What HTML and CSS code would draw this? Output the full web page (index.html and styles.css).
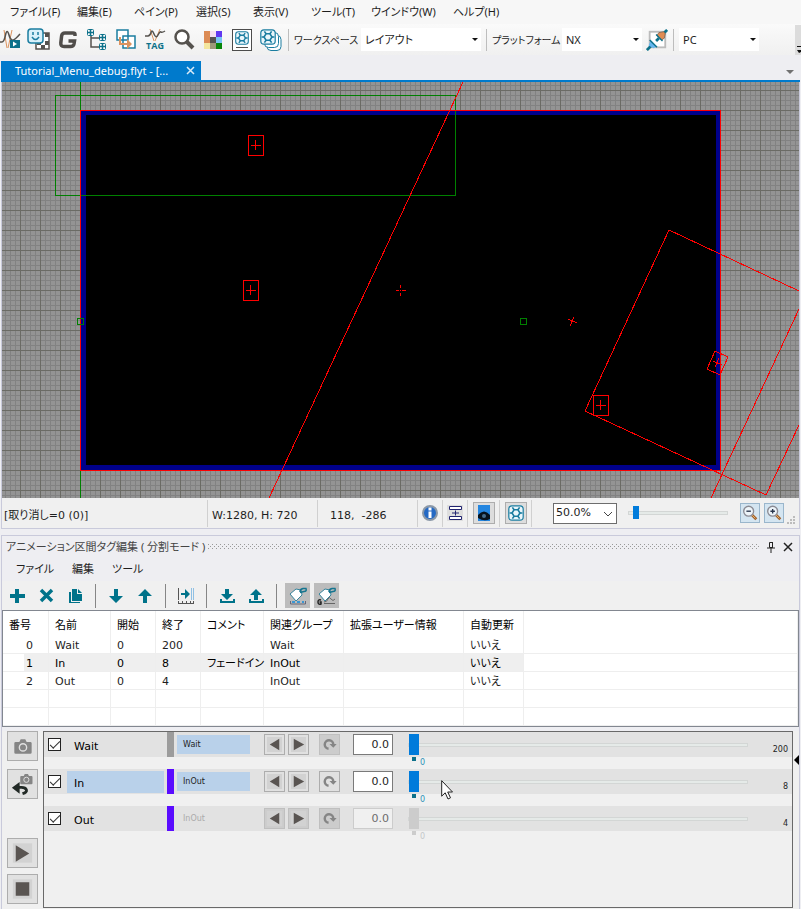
FILE: index.html
```html
<!DOCTYPE html>
<html lang="ja">
<head>
<meta charset="utf-8">
<title>Tutorial_Menu_debug.flyt</title>
<link rel="stylesheet" href="styles.css">
</head>
<body>
<svg class="defs" aria-hidden="true">
  <defs>
    <symbol id="hex" viewBox="0 0 20 20">
      <rect x="1" y="1" width="18" height="18" rx="4" fill="#eaf6fb" stroke="#1b7da0" stroke-width="1.500"/>
      <path d="M7.600 6h4.800L15 10l-2.600 4H7.600L5 10z" fill="none" stroke="#1b7da0" stroke-width="2"/>
      <path d="M7.600 6L5.500 3M12.400 6l2.100-3M15 10h3M12.400 14l2.100 3M7.600 14l-2.100 3M5 10H2" stroke="#1b7da0" stroke-width="2"/>
    </symbol>
    <symbol id="prev" viewBox="0 0 20 20"><rect x="2" y="2" width="16" height="16" fill="#d2d2d2"/><path d="M15 4v12L5 10z" fill="#5a5552"/></symbol>
    <symbol id="next" viewBox="0 0 20 20"><rect x="2" y="2" width="16" height="16" fill="#d2d2d2"/><path d="M5 4v12l11-6z" fill="#5a5552"/></symbol>
    <symbol id="loop" viewBox="0 0 20 20"><path d="M9 14.500A4.500 4.500 0 1 1 14 10" fill="none" stroke="#858585" stroke-width="2.600"/><path d="M10 9.500h7.500L14 13.500z" fill="#858585"/></symbol>
    <symbol id="camera" viewBox="0 0 20 18"><path d="M2 4h4l1.500-3h5L14 4h4q1.500 0 1.500 1.500v10Q19.500 17 18 17H2Q.5 17 .5 15.500v-10Q.5 4 2 4z" fill="#858585"/><circle cx="10" cy="10" r="4" fill="none" stroke="#e0e0e0" stroke-width="1.500"/></symbol>
    <symbol id="tag" viewBox="0 0 25 25"><path d="M5 11l6-5 5 1 1 5-6 6z" fill="#fff" stroke="#36849c"/><path d="M15 9q0-3 3-3.500h3q1 3-2 3l-4 1" fill="none" stroke="#16758f" stroke-width="1.500"/></symbol>
    <symbol id="lens" viewBox="0 0 20 20"><path d="M12 12l5 5" stroke="#a0602c" stroke-width="3"/><path d="M12 12l4 4" stroke="#f1bd72"/><circle cx="8.500" cy="8" r="5.500" fill="#edf4f9" stroke="#8b8b94" stroke-width="1.500"/></symbol>
  </defs>
</svg>

<nav class="menubar" aria-label="メイン">
  <button>ファイル(F)</button><button>編集(E)</button><button>ペイン(P)</button><button>選択(S)</button><button>表示(V)</button><button>ツール(T)</button><button>ウインドウ(W)</button><button>ヘルプ(H)</button>
</nav>

<div class="toolbar">
  <div class="tools">
    <button aria-label="カーブ"><svg viewBox="0 0 24 24"><path d="M6 2L9 20M14 2L10 20" stroke="#dc935e"/><path d="M1 14h3q2 0 3.500-7t3.500 0q1 4 3 5t8-6" fill="none" stroke="#55524e" stroke-width="1.500"/><rect x="12" y="12" width="10" height="8" fill="#0d718a"/><path d="M15 13.500v5l4-2.500z" fill="#fff"/></svg></button>
    <button aria-label="ペイン"><svg viewBox="0 0 24 24"><path d="M9 5h13v16H9z" fill="#fff" stroke="#55524e" stroke-width="1.500"/><path d="M18 5h4v4h-4zM14 17h4v4h-4zM18 13h4v4h-4zM10 17h4v-2h-4z" fill="#55524e"/><rect x="1" y="1" width="15" height="14" rx="3" fill="#d9f1fa" stroke="#1b7da0" stroke-width="1.500"/><path d="M6 4v3M11 4v3M5 9q3.500 5 7 0" fill="none" stroke="#1b7da0" stroke-width="1.500"/></svg></button>
    <button aria-label="グループ"><svg viewBox="0 0 24 24"><path d="M19 8V6.500q0-1.500-2-1.500H9Q6 5 5.600 8l-.8 7q-.3 3.500 3.200 3.500h6.500q3 0 3.500-2.500l.5-3h-6" fill="none" stroke="#504d4a" stroke-width="3.500"/></svg></button>
    <button aria-label="階層"><svg viewBox="0 0 24 24"><path d="M6 8v11h8M6 10h8" fill="none" stroke="#55524e" stroke-width="1.500"/><g fill="#fff" stroke="#0d718a"><rect x="2.500" y="1.500" width="6" height="6" rx="1"/><rect x="14.500" y="6.500" width="6" height="6" rx="1"/><rect x="14.500" y="15.500" width="6" height="6" rx="1"/></g><path d="M3 4.500h5M5.500 2v5M15 9.500h5M17.500 7v5M15 18.500h5M17.500 16v5" stroke="#0d718a" stroke-width="1.500"/></svg></button>
    <button aria-label="状態"><svg viewBox="0 0 24 24"><path d="M3 2h11v10H3zM9 8h12v12H9z" fill="#fff" stroke="#1b7da0" stroke-width="1.500"/><path d="M5 9h2v6h6v-4l5 5-5 5v-4H5z" fill="#dc935e"/></svg></button>
    <button aria-label="タグ"><svg viewBox="0 0 24 24"><path d="M7 1l4 12M17 1l-5 12" fill="none" stroke="#dc935e"/><path d="M2 8h3q2 0 3-3.500t3 1.500q2 5 4 1t3-3 4-1" fill="none" stroke="#55524e" stroke-width="1.500"/><text x="12" y="21" text-anchor="middle" class="tagtext">TAG</text></svg></button>
    <button aria-label="検索"><svg viewBox="0 0 24 24"><circle cx="10" cy="9" r="6.500" fill="#fff" stroke="#55524e" stroke-width="2.500"/><path d="M15 14l6 6" stroke="#55524e" stroke-width="4"/></svg></button>
    <button aria-label="色"><svg viewBox="0 0 24 24" shape-rendering="crispEdges"><path d="M3 3h6v6H3z" fill="#dc8b55"/><path d="M9 3h6v6H9z" fill="#f3dfef"/><path d="M15 3h6v6h-6z" fill="#6038f0"/><path d="M3 9h6v6H3z" fill="#dc8b55"/><path d="M9 9h6v6H9z" fill="#55524e"/><path d="M15 9h6v6h-6z" fill="#79c4f4"/><path d="M3 15h6v6H3z" fill="#f4e69e"/><path d="M9 15h6v6H9z" fill="#9c9879"/><path d="M15 15h6v6h-6z" fill="#07860a"/></svg></button>
    <button aria-label="レイアウト情報"><svg viewBox="0 0 24 24"><rect x="2.500" y="1.500" width="19" height="21" fill="#fff" stroke="#4c4c4c"/><use href="#hex" x="5" y="3" width="14" height="14"/><path d="M6 19.500h12" stroke="#55524e"/></svg></button>
    <button aria-label="レイアウト一覧"><svg viewBox="0 0 24 24"><rect x="8" y="7.500" width="14" height="15" rx="4" fill="#fff" stroke="#1b7da0"/><rect x="5.500" y="4.500" width="14" height="15" rx="4" fill="#fff" stroke="#1b7da0"/><use href="#hex" x="1" y="1" width="16" height="16"/></svg></button>
  </div>
  <span class="sep"></span>
  <label for="workspace">ワークスペース</label>
  <span class="combo wide"><select id="workspace"><option>レイアウト</option></select></span>
  <span class="sep"></span>
  <label for="platform" class="long">プラットフォーム</label>
  <span class="combo"><select id="platform"><option>NX</option></select></span>
  <button class="plug" aria-label="接続"><svg viewBox="0 0 24 24"><rect x="4" y="3" width="17" height="17" fill="#fff" stroke="#bcbcbc" stroke-width="2"/><path d="M1 23l5-5M18 6l5-5M11 13l3-3" stroke="#0d718a" stroke-width="3"/><path d="M5 12l7 7-4 2-5-3z" fill="#63b5ee"/><path d="M4 12l8 8" stroke="#0d718a" stroke-width="1.500"/><path d="M14 4l5-1 2 2-1 5-3 2-5-5z" fill="#e08b52" stroke="#8b6a52"/><path d="M11 6l7 7" stroke="#0d718a" stroke-width="1.500"/></svg></button>
  <span class="sep"></span>
  <span class="combo"><select aria-label="接続先"><option>PC</option></select></span>
  <button class="overflow" aria-label="その他"><svg viewBox="0 0 6 30"><path d="M2 21h4v1H2zM2 25h4v2l-2 1z" fill="#111"/></svg></button>
</div>

<div class="tabs">
  <button class="tab"><span>Tutorial_Menu_debug.flyt - [...</span><svg viewBox="0 0 9 9"><path d="M1 1l7 7M8 1L1 8" stroke="#d7eaf8" stroke-width="1.500"/></svg></button>
  <span class="tabmenu"></span>
</div>

<main class="document">
  <svg class="canvas" role="img" aria-label="レイアウト">
    <defs>
      <pattern id="minor" width="5" height="5" patternUnits="userSpaceOnUse"><path d="M0 0h5v1H1v4H0z" fill="#828282"/></pattern>
      <pattern id="major" width="20" height="20" patternUnits="userSpaceOnUse" y="10"><path d="M0 0h20v1H1v19H0z" fill="#6b6b65"/></pattern>
    </defs>
    <g transform="translate(-2 -82)" shape-rendering="crispEdges" fill="none" stroke="red">
      <rect width="4000" height="600" fill="#949494" stroke="none"/>
      <rect width="4000" height="600" fill="url(#minor)" stroke="none"/>
      <rect width="4000" height="600" fill="url(#major)" stroke="none"/>
      <path d="M80.500 82v28M80.500 470v30" stroke="green"/>
      <rect x="80.500" y="110.500" width="640" height="360" fill="#00008b"/>
      <rect x="86" y="115" width="630" height="350" fill="#000" stroke="none"/>
      <rect x="55.500" y="95.500" width="400" height="100" stroke="green"/>
      <path d="M80.500 110.500h640v360h-640z"/>
      <path d="M77.500 318.500h6v6h-6zM520.500 318.500h6v6h-6z" stroke="green"/>
      <path d="M463 82L269 498M799 291L669 230 585 411l181 84 33-70M799 309L711 498"/>
      <path d="M248.500 135.500h15v20h-15zM251 145.500h10M255.500 140v10M243.500 280.500h15v20h-15zM246 290.500h10M250.500 285v10M593.500 395.500h15v20h-15zM596 405.500h10M600.500 400v10"/>
      <path d="M396 290.500h3M402 290.500h4M400.500 285v3M400.500 293v3M400 290.500h1M568 319l9 4M574 317l-4 9M715 351l13 6-8 18-13-6zM713 361l9 4M719 358l-4 9"/>
    </g>
  </svg>
  <div class="status">
    <div class="cell undo">[取り消し=0 (0)]</div>
    <div class="cell size">W:1280, H: 720</div>
    <div class="cell pos">118,&nbsp; -286</div>
    <div class="cell icon"><svg class="i20" viewBox="0 0 20 20"><circle cx="10" cy="10" r="7" fill="#2469c4" stroke="#8b98a7" stroke-width="2"/><path d="M8.500 8.500h3V15h-3zM8.500 4.500h3v3h-3z" fill="#fff"/></svg></div>
    <div class="cell icon"><svg class="i20" viewBox="0 0 20 20"><path d="M2 2h16v16H2z" fill="#dedede"/><path d="M4.500 3.500h12v3h-12zM4.500 13.500h12v3h-12zM10.500 7.500v5M7 10h7" fill="#fff" stroke="#222470"/></svg></div>
    <div class="cell toggle"><button aria-label="表示"><svg class="i20" viewBox="0 0 20 20"><rect x="4" y="2" width="12" height="16" fill="#2486e0"/><path d="M4 12q6-7 12 0v4q-6 3-12-1z" fill="#07131e"/><circle cx="10" cy="13" r="2" fill="#456d8d"/></svg></button></div>
    <div class="cell toggle"><button aria-label="レイアウト"><svg class="i20" viewBox="0 0 20 20"><use href="#hex" x="2" y="2" width="16" height="16"/></svg></button></div>
    <span class="combo zoom"><select aria-label="倍率"><option>50.0%</option></select><svg viewBox="0 0 10 6"><path d="M1 1l4 4 4-4" fill="none" stroke="#444"/></svg></span>
    <input class="zoomslider" type="range" min="0" max="100" value="4" aria-label="倍率">
    <button class="lens" aria-label="縮小"><svg viewBox="0 0 20 20"><use href="#lens"/><path d="M6 8h5" stroke="#28344b" stroke-width="1.500"/></svg></button>
    <button class="lens in" aria-label="拡大"><svg viewBox="0 0 20 20"><use href="#lens"/><path d="M6 8h5M8.500 5.500v5" stroke="#28344b" stroke-width="1.500"/></svg></button>
    <svg class="grip" viewBox="0 0 9 9"><path d="M6 0h2v2H6zM3 3h2v2H3zM6 3h2v2H6zM0 6h2v2H0zM3 6h2v2H3zM6 6h2v2H6z" fill="#bcbcbc"/></svg>
  </div>
</main>

<section class="panel">
  <header class="title">
    <h2>アニメーション区間タグ編集 ( 分割モード )</h2><span class="dots"></span>
    <button aria-label="固定"><svg viewBox="0 0 10 12"><path d="M3.500 1.500h3v5h-3zM6.500 1v6M1 7h8M5 7v5" fill="none" stroke="#222"/></svg></button>
    <button aria-label="閉じる"><svg viewBox="0 0 10 12"><path d="M1 2l8 8M9 2l-8 8" stroke="#222" stroke-width="1.500"/></svg></button>
  </header>
  <nav class="panelmenu" aria-label="タグ"><button>ファイル</button><button>編集</button><button>ツール</button></nav>
  <div class="paneltools">
    <button aria-label="追加"><svg viewBox="0 0 25 25"><path d="M10 6h4v5h6v4h-6v5h-4v-5H5v-4h5z" fill="#00738a"/></svg></button>
    <button aria-label="削除"><svg viewBox="0 0 25 25"><path d="M7 7l11 11M18 7L7 18" stroke="#00738a" stroke-width="3.500"/></svg></button>
    <button aria-label="複製"><svg viewBox="0 0 25 25"><path d="M9 6h5v5h5v7H9zM15 6l4 4h-4zM6 9h2v10h9v1H6z" fill="#00738a"/></svg></button>
    <span class="sep"></span>
    <button aria-label="下へ"><svg viewBox="0 0 25 25"><path d="M10 6h4v7h5l-7 7-7-7h5z" fill="#00738a"/></svg></button>
    <button aria-label="上へ"><svg viewBox="0 0 25 25"><path d="M10 20h4v-7h5l-7-7-7 7h5z" fill="#00738a"/></svg></button>
    <span class="sep"></span>
    <button aria-label="範囲"><svg viewBox="0 0 25 25"><path d="M4.500 5v12M4 20.500h16M4.500 18v3M8.500 18v3M12.500 18v3M16.500 18v3M19.500 18v3" stroke="#555" fill="none"/><path d="M7 10h4V6l5 5-5 5v-4H7z" fill="#00738a"/><path d="M17.500 5v12M19.500 5v12" stroke="#8fc0e4"/></svg></button>
    <span class="sep"></span>
    <button aria-label="読み込み"><svg viewBox="0 0 25 25"><path d="M10 6h4v5h4l-6 6-6-6h4zM5 16h2v2h11v-2h2v4H5z" fill="#00738a"/></svg></button>
    <button aria-label="書き出し"><svg viewBox="0 0 25 25"><path d="M10 17h4v-5h4l-6-6-6 6h4zM5 16h2v2h11v-2h2v4H5z" fill="#00738a"/></svg></button>
    <span class="sep"></span>
    <button class="on" aria-label="タグ表示"><svg viewBox="0 0 25 25"><use href="#tag"/><path d="M5.500 18v3h15v-3" fill="none" stroke="#667"/><path d="M7 18h3v2H7zM12 18h3v2h-3zM17 18h2v2h-2z" fill="#3a97d4"/></svg></button>
    <button class="on" aria-label="グループ表示"><svg viewBox="0 0 25 25"><use href="#tag"/><path d="M7 17q-3-1-3 2t3 2v-2H5.500" fill="none" stroke="#222" stroke-width="1.500"/><path d="M10 20.500h11M10 19q3 0 4-3t3 0 4 0" fill="none" stroke="#666"/></svg></button>
  </div>

  <div class="tablebox">
    <table>
      <colgroup><col class="c1"><col class="c2"><col class="c3"><col class="c3"><col class="c4"><col class="c5"><col class="c6"><col class="c7"><col></colgroup>
      <thead><tr><th>番号</th><th>名前</th><th>開始</th><th>終了</th><th>コメント</th><th>関連グループ</th><th>拡張ユーザー情報</th><th>自動更新</th><th></th></tr></thead>
      <tbody>
        <tr><td>0</td><td>Wait</td><td>0</td><td>200</td><td></td><td>Wait</td><td></td><td>いいえ</td><td></td></tr>
        <tr class="selected"><td>1</td><td>In</td><td>0</td><td>8</td><td>フェードイン</td><td>InOut</td><td></td><td>いいえ</td><td></td></tr>
        <tr><td>2</td><td>Out</td><td>0</td><td>4</td><td></td><td>InOut</td><td></td><td>いいえ</td><td></td></tr>
        <tr><td></td><td></td><td></td><td></td><td></td><td></td><td></td><td></td><td></td></tr>
        <tr><td></td><td></td><td></td><td></td><td></td><td></td><td></td><td></td><td></td></tr>
      </tbody>
    </table>
  </div>

  <div class="player">
    <div class="transport">
      <button aria-label="撮影"><svg viewBox="0 0 30 28"><use href="#camera" x="6" y="6" width="19" height="17"/></svg></button>
      <button aria-label="戻す"><svg viewBox="0 0 30 28"><use href="#camera" x="12" y="3" width="14" height="12"/><path d="M8 17.500h6q4 0 5 2.500t-4 4" fill="none" stroke="#222a26" stroke-width="3"/><path d="M4 18l8-6v12z" fill="#222a26"/></svg></button>
      <button class="play" aria-label="再生"><svg viewBox="0 0 30 28"><rect x="5" y="4" width="20" height="20" fill="#d2d2d2"/><path d="M8 6v17l14-8.500z" fill="#5a5552"/></svg></button>
      <button aria-label="停止"><svg viewBox="0 0 30 28"><rect x="5" y="4" width="20" height="20" fill="#d2d2d2"/><rect x="8" y="7" width="14" height="14" fill="#5a5552"/></svg></button>
    </div>
    <div class="tracks">
      <div class="track once">
        <div class="band">
          <input type="checkbox" id="t0" checked><label for="t0" class="name">Wait</label><span class="color"></span><span class="group">Wait</span>
          <button aria-label="前へ"><svg viewBox="0 0 20 20"><use href="#prev"/></svg></button><button aria-label="次へ"><svg viewBox="0 0 20 20"><use href="#next"/></svg></button><button class="loop" aria-label="ループ"><svg viewBox="0 0 20 20"><use href="#loop"/></svg></button>
          <input type="text" value="0.0" aria-label="フレーム"><input type="range" value="0" aria-label="位置"><span class="end">200</span>
        </div>
        <div class="scale"><i></i>0</div>
      </div>
      <div class="track active">
        <div class="band">
          <input type="checkbox" id="t1" checked><label for="t1" class="name">In</label><span class="color"></span><span class="group">InOut</span>
          <button aria-label="前へ"><svg viewBox="0 0 20 20"><use href="#prev"/></svg></button><button aria-label="次へ"><svg viewBox="0 0 20 20"><use href="#next"/></svg></button><button class="loop" aria-label="ループ"><svg viewBox="0 0 20 20"><use href="#loop"/></svg></button>
          <input type="text" value="0.0" aria-label="フレーム"><input type="range" value="0" aria-label="位置"><span class="end">8</span>
        </div>
        <div class="scale"><i></i>0</div>
      </div>
      <div class="track idle">
        <div class="band">
          <input type="checkbox" id="t2" checked><label for="t2" class="name">Out</label><span class="color"></span><span class="group">InOut</span>
          <button aria-label="前へ" disabled><svg viewBox="0 0 20 20"><use href="#prev"/></svg></button><button aria-label="次へ" disabled><svg viewBox="0 0 20 20"><use href="#next"/></svg></button><button class="loop" aria-label="ループ" disabled><svg viewBox="0 0 20 20"><use href="#loop"/></svg></button>
          <input type="text" value="0.0" aria-label="フレーム" disabled><input type="range" value="0" aria-label="位置" disabled><span class="end">4</span>
        </div>
        <div class="scale"><i></i>0</div>
      </div>
      <svg class="cursor" viewBox="0 0 12 20"><path d="M.7.700v15.500l3.500-3.400 2.800 6.200 2.500-1.200-2.800-5.800h4.800z" fill="#fff" stroke="#222"/></svg>
    </div>
    <span class="fold"></span>
  </div>
</section>
</body>
</html>
```

FILE: styles.css
```css
* { box-sizing: border-box; }

body {
  margin: 0;
  min-height: 100vh;
  display: flex;
  flex-direction: column;
  background: #eeeef2;
  color: #1e1e1e;
  font: 12px/16px "Noto Sans", "Noto Sans CJK JP", sans-serif;
  font-feature-settings: "palt";
  white-space: nowrap;
}

button, input, select {
  font: inherit;
  font-feature-settings: inherit;
  color: inherit;
  margin: 0;
  padding: 0;
  border: 0;
  border-radius: 0;
  background: none;
}

svg { display: block; flex: none; }
.defs { position: absolute; width: 0; height: 0; }

/* Main menu and toolbar */
.menubar {
  display: grid;
  grid-template-columns: 67px 57px 62px 57px 58px 60px 82px auto;
  justify-items: start;
  height: 24px;
  padding-left: 10px;
  background: #f7f7f7;
  font-size: 11px;
}

.toolbar {
  display: flex;
  align-items: center;
  height: 31px;
  background: linear-gradient(#fafafa, #f0f0f0);
}

.tools { display: flex; gap: 5px; margin-left: -2px; }
.tools svg { width: 24px; height: 24px; overflow: visible; }
.tagtext { font: bold 9px/9px "Open Sans", sans-serif; fill: #0d718a; }

.toolbar .sep { width: 1px; height: 22px; margin: 0 5px; background: #bdbdbd; }
.toolbar label { width: 67px; font-size: 10px; }
.toolbar .long { width: 70px; }

.combo { position: relative; width: 80px; }
.combo select {
  width: 100%;
  height: 23px;
  padding-left: 4px;
  appearance: none;
  background: #fff;
  font-size: 11px;
}
.wide { width: 120px; }
.toolbar .combo::after, .tabmenu {
  content: "";
  border: solid transparent;
  border-width: 3px 3px 0;
  border-top-color: #111;
}
.toolbar .combo::after { position: absolute; right: 3px; top: 10px; }
.plug { margin-left: 4px; }
.plug svg { width: 22px; height: 22px; }
.overflow { width: 6px; height: 30px; margin-left: auto; background: #dcdcdc; }

/* Document tabs */
.tabs {
  display: flex;
  justify-content: space-between;
  align-items: end;
  height: 27px;
  margin: 0 1px;
  border-bottom: 2px solid #007acc;
}
.tab {
  display: flex;
  align-items: center;
  justify-content: space-between;
  width: 200px;
  height: 19px;
  padding: 0 6px 0 14px;
  background: #007acc;
  color: #fff;
  font-size: 11px;
}
.tab svg { width: 9px; height: 9px; }
.tabmenu { margin: 0 6px 6px; border-width: 4px 4px 0; border-top-color: #717171; }

.document { border: solid #c9cadb; border-width: 0 1px 1px; margin: 0 1px; }
.canvas { width: 100%; height: 416px; }

/* Status bar */
.status {
  display: flex;
  align-items: center;
  height: 30px;
  background: #f0f0f0;
  font-family: "DejaVu Sans", "Noto Sans CJK JP", sans-serif;
  font-size: 11px;
}
.cell {
  display: flex;
  align-items: center;
  height: 27px;
  border-right: 1px solid #d0d0d0;
}
.undo, .size, .pos { padding-top: 5px; }
.undo { width: 206px; padding-left: 2px; }
.size { width: 110px; padding-left: 4px; }
.pos { width: 100px; padding-left: 12px; }
.icon { width: 25px; justify-content: center; }
.toggle { width: 32px; justify-content: center; }
.i20 { width: 20px; height: 20px; }
.toggle button { border: 1px solid #adadad; background: #ddd; }
.zoom { width: 64px; margin-left: 21px; }
.zoom select { height: 21px; padding-left: 2px; border: 1px solid #6d6d6d; }
.zoom svg { position: absolute; right: 4px; top: 8px; width: 10px; height: 6px; }

input[type="range"] {
  appearance: none;
  height: 22px;
  min-width: 0;
}
input[type="range"]::-webkit-slider-runnable-track {
  height: 4px;
  border: 1px solid #d3d6d5;
  background: #e5eae8;
}
input[type="range"]::-webkit-slider-thumb {
  appearance: none;
  width: 10px;
  height: 21px;
  margin-top: -10px;
  background: #007bdb;
}
.status .zoomslider { flex: 1; margin: 0 12px 0 11px; }
.status .zoomslider::-webkit-slider-thumb { width: 6px; height: 13px; margin-top: -6px; }

.lens { width: 20px; height: 20px; border: 1px solid #9ab6cc; background: #d4e5f1; }
.lens.in { margin-left: 4px; }
.grip { width: 9px; height: 9px; margin: 14px 3px 0; }

/* Tag panel */
.panel {
  flex: 1;
  display: flex;
  flex-direction: column;
  margin: 6px 1px 0;
  border: 1px solid #c9cadb;
}
.title { display: flex; align-items: center; height: 21px; padding: 0 6px 0 4px; }
.title h2 { margin: 0 3px 0 0; font-size: 11px; font-weight: normal; color: #444; }
.dots {
  flex: 1;
  height: 5px;
  margin-right: 6px;
  background:
    conic-gradient(at 1px 1px, transparent 75%, #999 0) 0 0 / 4px 4px,
    conic-gradient(at 1px 1px, transparent 75%, #999 0) 2px 2px / 4px 4px;
}
.title button { margin-left: 1px; }
.title button + button { margin-left: 7px; }
.title svg { width: 10px; height: 12px; }

.panelmenu {
  display: flex;
  gap: 18px;
  height: 24px;
  padding-left: 14px;
  font-size: 11px;
}

.paneltools {
  display: flex;
  align-items: center;
  gap: 4px;
  height: 29px;
  padding-left: 3px;
  background: #f0f0f0;
}
.paneltools svg { width: 25px; height: 25px; }
.paneltools .sep { width: 1px; height: 24px; margin: 0 4px 0 3px; background: #868686; }
.paneltools .on { background: #bcbcbc; }

.tablebox { border: 1px solid #828790; background: #fff; height: 117px; overflow: hidden; }
table {
  width: 100%;
  table-layout: fixed;
  border-collapse: separate;
  border-spacing: 0;
  font-family: "DejaVu Sans", "Noto Sans CJK JP", sans-serif;
  font-size: 11px;
}
.c1 { width: 46px; }
.c2 { width: 62px; }
.c3 { width: 45px; }
.c4 { width: 63px; }
.c5 { width: 80px; }
.c6 { width: 120px; }
.c7 { width: 60px; }
th, td { height: 18px; padding: 3px 0 0 6px; text-align: left; border: solid #eee; border-width: 0 1px 1px 0; line-height: 14px; }
th { height: 25px; padding-top: 4px; border-bottom: 0; font-weight: normal; color: #000; }
td:first-child { padding: 3px 15px 0 0; text-align: right; }
.selected td { background: #efefef; color: #000; }
.selected td:first-child { background: linear-gradient(90deg, #fff 21px, #efefef 21px); }
.selected td:last-child { background: #fff; }

/* Playback tracks */
.player {
  flex: 1;
  display: flex;
  margin-top: 4px;
  background: #f0f0f0;
}
.transport { display: flex; flex-direction: column; gap: 8px; width: 36px; margin-right: 5px; padding-left: 5px; }
.transport button { border: 1px solid #adadad; background: #e1e1e1; }
.transport svg { width: 29px; height: 28px; }
.transport .play { margin-top: 31px; }
.transport button:last-child { margin-top: -2px; }

.tracks {
  position: relative;
  flex: 1;
  min-height: 177px;
  margin-bottom: 1px;
  border: 1px solid #696969;
  font-family: "DejaVu Sans", "Noto Sans CJK JP", sans-serif;
}
.track { height: 37px; }
.band {
  display: grid;
  grid-template-columns: 13px 100px 7px 73px 21px 21px 21px 40px 1fr 41px;
  column-gap: 3px;
  align-items: center;
  height: 25px;
  padding-left: 4px;
  background: #e2e2e2;
}
.band input[type="checkbox"] {
  appearance: none;
  width: 13px;
  height: 13px;
  border: 1px solid #222;
  background: #fff;
}
.band input[type="checkbox"]:checked::before {
  content: "";
  display: block;
  width: 9px;
  height: 4px;
  margin: 2px 1px;
  border: solid #333;
  border-width: 0 0 1px 1px;
  rotate: -45deg;
}
.name { height: 22px; margin-left: 3px; padding: 5px 7px 0; color: #000; font-size: 11px; }
.active .name { background: #b9d1ea; }
.color { height: 25px; background: #5a0cff; }
.once .color { background: #9c9c9c; }
.group { height: 19px; padding-left: 6px; background: #b9d1ea; font-size: 8px; line-height: 19px; }
.idle .group { background: none; color: #ababab; }
.band button { width: 21px; height: 21px; border: 1px solid #adadad; background: #e1e1e1; }
.band svg { width: 19px; height: 19px; }
.group + button { margin-left: 11px; }
.band button:nth-of-type(2) { margin-left: 11px; }
.band .loop { margin-left: 18px; }
.once .loop, .idle button { background: #ccc; border-color: #bfbfbf; }
.band input[type="text"] {
  width: 40px;
  height: 21px;
  margin-left: 28px;
  padding-right: 3px;
  border: 1px solid #7a7a7a;
  background: #fff;
  font-size: 11px;
  text-align: right;
}
.band input[type="text"]:disabled { border-color: #ccc; background: #f0f0f0; color: #6d6d6d; }
.band input[type="range"] { margin-left: 40px; }
.band input[type="range"]:disabled::-webkit-slider-thumb { background: #ccc; }
.end { align-self: end; padding-right: 4px; text-align: right; font-size: 8px; line-height: 14px; }
.scale { display: flex; gap: 4px; height: 12px; padding-left: 368px; font-size: 8px; line-height: 12px; color: #2e94b8; }
.scale i { width: 4px; height: 4px; background: #0d718a; }
.idle .scale { color: #c4c8ca; }
.idle .scale i { background: #ccc; }
.cursor { position: absolute; left: 397px; top: 48px; width: 12px; height: 20px; }
.fold {
  width: 6px;
  height: 10px;
  margin-top: 24px;
  border: solid transparent;
  border-width: 5px 5px 5px 0;
  border-right-color: #000;
}
```
